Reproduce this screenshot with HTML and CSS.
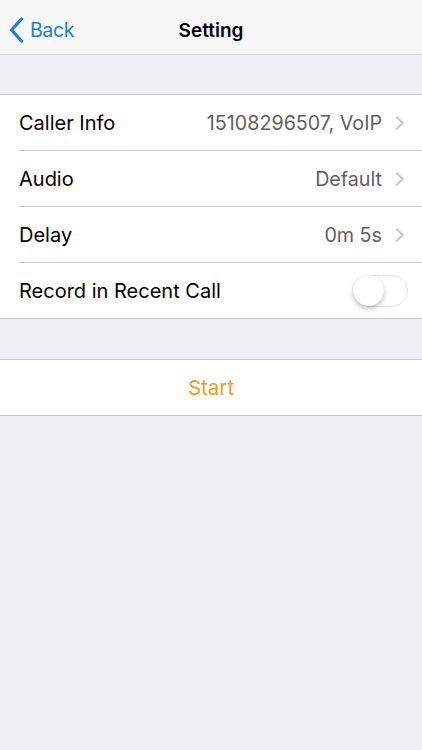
FILE: index.html
```html
<!DOCTYPE html>
<html lang="en">
<head>
  <meta charset="UTF-8">
  <title>Setting</title>
  <link rel="stylesheet" href="styles.css">
</head>
<body>

  <div class="navbar">
    <a class="back" href="#">
      <svg class="back-icon" width="15" height="26" viewBox="0 0 15 26">
        <path d="M12.5 2 L2.5 13 L12.5 24" fill="none" stroke="#1a7ee3" stroke-width="3.2" stroke-linecap="round" stroke-linejoin="round"/>
      </svg>
      <span>Back</span>
    </a>
    <div class="title">Setting</div>
  </div>

  <div class="group">
    <div class="cell">
      <span class="label">Caller Info</span>
      <span class="detail">15108296507, VoIP</span>
      <span class="chevron"></span>
    </div>
    <div class="cell">
      <span class="label">Audio</span>
      <span class="detail">Default</span>
      <span class="chevron"></span>
    </div>
    <div class="cell">
      <span class="label">Delay</span>
      <span class="detail">0m 5s</span>
      <span class="chevron"></span>
    </div>
    <div class="cell">
      <span class="label">Record in Recent Call</span>
      <span class="switch"><span class="knob"></span></span>
    </div>
  </div>

  <div class="group">
    <div class="cell start">Start</div>
  </div>

</body>
</html>
```

FILE: styles.css
```css
body {
  margin: 0;
  background: #efeff4;
  font-family: Inter, "Noto Sans", sans-serif;
  width: 422px;
  height: 750px;
  overflow: hidden;
}

.navbar {
  height: 48px;
  padding-top: 6px;
  background: #f7f7f8;
  border-bottom: 1px solid #d6d6da;
  display: flex;
  align-items: center;
  justify-content: center;
  position: relative;
}

.back {
  position: absolute;
  left: 9px;
  top: 6px;
  height: 48px;
  display: flex;
  align-items: center;
  gap: 6px;
  color: #1a7ee3;
  text-decoration: none;
  font-size: 19.5px;
  letter-spacing: -0.4px;
}

.title {
  font-size: 19px;
  font-weight: 600;
  color: #000;
}

.group {
  margin-top: 39px;
  background: #fff;
  border-top: 1px solid #c8c7cc;
  border-bottom: 1px solid #c8c7cc;
}

.group + .group {
  margin-top: 40px;
}

.cell {
  height: 55px;
  display: flex;
  align-items: center;
  padding: 0 14px 0 19px;
  position: relative;
}

/* inset separator between rows */
.cell + .cell {
  padding-top: 1px;
}

.cell + .cell::before {
  content: "";
  position: absolute;
  left: 19px;
  right: 0;
  top: 0;
  height: 1px;
  background: #c8c7cc;
}

.label {
  flex: 1;
  font-size: 20px;
  color: #000;
}

.detail {
  font-size: 19.7px;
  color: #5f5f63;
}

.chevron {
  width: 8px;
  height: 8px;
  border-top: 2px solid #c7c7cc;
  border-right: 2px solid #c7c7cc;
  transform: rotate(45deg);
  margin-left: 10px;
  margin-right: 6px;
}

.switch {
  width: 55px;
  height: 32px;
  border-radius: 16px;
  border: 1.5px solid #e5e5ea;
  box-sizing: border-box;
  background: #fff;
  position: relative;
}

.knob {
  position: absolute;
  left: -1px;
  top: -1px;
  width: 31px;
  height: 31px;
  border-radius: 50%;
  background: #fff;
  box-shadow: 0 3px 5px rgba(0, 0, 0, 0.22), 0 0 1px rgba(0, 0, 0, 0.2);
}

.start {
  justify-content: center;
  padding: 0;
  font-size: 20.5px;
  color: #f39a1b;
}
```
